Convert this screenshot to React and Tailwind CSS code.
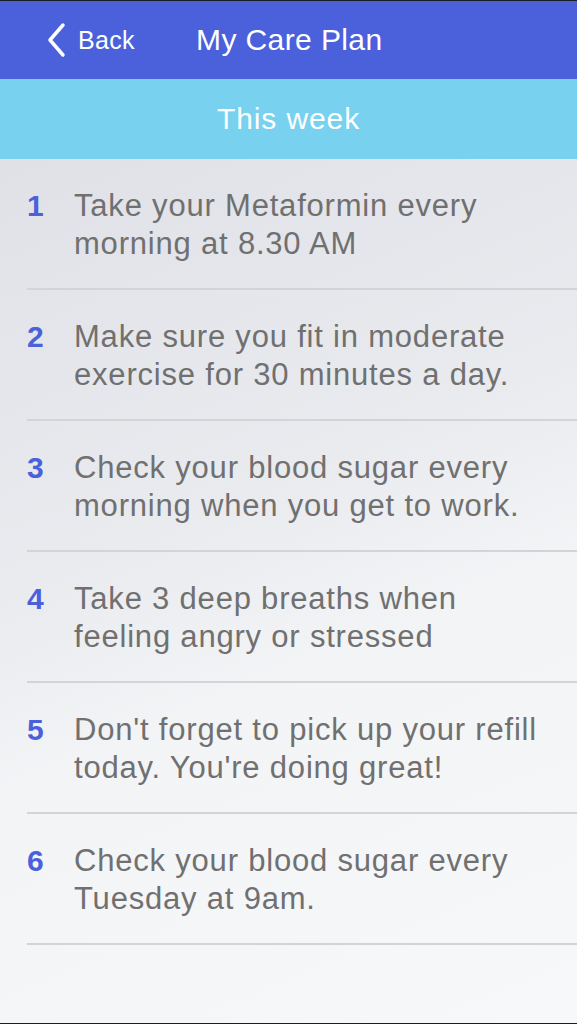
import React from 'react';

const items = [
  'Take your Metaformin every morning at 8.30 AM',
  'Make sure you fit in moderate exercise for 30 minutes a day.',
  'Check your blood sugar every morning when you get to work.',
  'Take 3 deep breaths when feeling angry or stressed',
  "Don't forget to pick up your refill today. You're doing great!",
  'Check your blood sugar every Tuesday at 9am.',
];

const App = () => {
  return (
    <div
      className="w-[577px] h-[1024px] flex flex-col overflow-hidden border-t border-b border-[#1c1d22]"
      style={{ fontFamily: '"Liberation Sans", Arial, sans-serif' }}
    >
      {/* Nav bar */}
      <div className="h-[78px] bg-[#4a61db] flex items-center text-white">
        <div className="flex items-center pl-[46px] w-[196px]">
          <svg width="22" height="36" viewBox="0 0 22 36" fill="none">
            <path d="M17 3 L4 18 L17 33" stroke="white" strokeWidth="3.5" strokeLinecap="round" strokeLinejoin="round" />
          </svg>
          <span className="ml-[10px] text-[25px] leading-none tracking-[0.3px]">Back</span>
        </div>
        <span className="text-[30px] leading-none tracking-[0.4px]">My Care Plan</span>
      </div>

      {/* Section header */}
      <div className="h-[80px] bg-[#77d1ef] flex items-center justify-center">
        <span className="text-white text-[30px] leading-none tracking-[0.9px]">This week</span>
      </div>

      {/* List */}
      <div className="flex-1 bg-[linear-gradient(157deg,#dfe1e7_0%,#e9ebef_40%,#f3f4f6_58%,#f7f8fa_100%)]">
        {items.map((text, i) => (
          <div key={i} className="ml-[27px] h-[131px] border-b-2 border-[#d3d4d8] flex items-start pt-[28px]">
            <span className="w-[47px] text-[30px] leading-[38px] font-bold text-[#4a61db]">{i + 1}</span>
            <p className="flex-1 pr-[25px] text-[31px] leading-[38px] tracking-[0.8px] text-[#707070]">{text}</p>
          </div>
        ))}
      </div>
    </div>
  );
};

export default App;
